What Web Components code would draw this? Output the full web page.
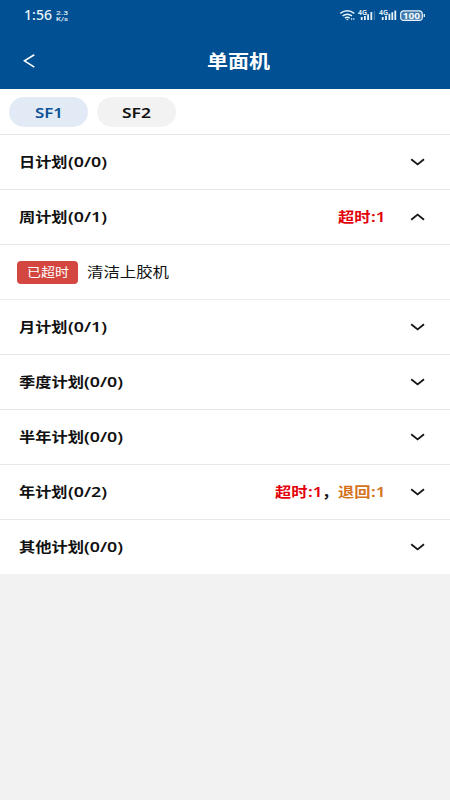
<!DOCTYPE html>
<html lang="zh-CN">
<head>
<meta charset="utf-8">
<title>单面机</title>
<style>
html,body{margin:0;height:100%;background:#f2f2f2;font-family:"Noto Sans","Noto Sans CJK SC",sans-serif;overflow:hidden}
</style>
</head>
<body>
<plan-app></plan-app>
<script>
const define = (name, html, setup) => customElements.define(name, class extends HTMLElement {
  connectedCallback() {
    if (this.shadowRoot) return;
    const t = document.createElement('template');
    t.innerHTML = html;
    this.attachShadow({mode: 'open'}).append(t.content.cloneNode(true));
    if (setup) setup(this, this.shadowRoot);
  }
});

// Text stretched horizontally to the width given by its "w" attribute.
define('fit-text', `<style>
:host{display:block;white-space:nowrap;flex:none}
:host([num]){font-size:14.5px;font-weight:650}
span{display:inline-block;transform-origin:0 50%}
</style><span><slot></slot></span>`, (el, root) => {
  const w = +el.getAttribute('w'), s = root.querySelector('span');
  const natural = s.getBoundingClientRect().width;
  el.style.width = w + 'px';
  s.style.transform = `scaleX(${w / natural})`;
});

define('status-bar', `<style>
:host{display:flex;height:32px;padding:0 25px 0 24px;align-items:center;box-sizing:border-box;color:#e8f4fa}
.time{font-size:13.5px;font-weight:500;line-height:20px;margin-top:-2px}
.rate{display:grid;grid-template-rows:6px 6px;margin:-1px auto 0 4px;font-family:Roboto,sans-serif;font-size:6px;font-weight:500;line-height:6px}
svg{display:block;margin-top:-2px}
</style>
<fit-text class="time" w="28">1:56</fit-text>
<div class="rate"><fit-text w="12">2.3</fit-text><fit-text w="12">K/s</fit-text></div>
<svg width="86" height="14" viewBox="339 8 86 14" fill="none" stroke="#e8f4fa">
<path d="M340.3 13.4q7-5.2 14 0M342.6 15.9q4.7-3.5 9.4 0M344.9 18.1q2.4-1.7 4.8 0" stroke-width="1.5"/>
<path d="M346 19.1h2.6l-1.3 1.3z" fill="#e8f4fa" stroke="none"/>
<path d="M351 19.1h1.2m1 0h1.2" stroke-width="1.5"/>
<path d="M361.7 20v-3M364.9 20v-4M368.1 20v-5.7M371.3 20v-8M382.7 20v-3M386 20v-4.2M389.4 20v-6.3M392.3 20v-7.8M395.3 20v-9.5" stroke-width="1.8"/>
<path d="M374.3 20V11" stroke="#5285b3" stroke-width="1"/>
<rect x="400.7" y="10.8" width="21.6" height="9.6" rx="3.2" fill="#3f79ac" stroke-width="1.2"/>
<path d="M424.3 14v3" stroke-width="1.3"/>
<g fill="#f4fbff" stroke="none" font-family="Noto Sans" font-weight="600">
<text x="358" y="14.8" font-size="6.5" textLength="9" lengthAdjust="spacingAndGlyphs">4G</text>
<text x="379" y="14.8" font-size="6.5" textLength="9" lengthAdjust="spacingAndGlyphs">4G</text>
<text x="402.7" y="19" font-size="9.5" font-weight="700" textLength="17.5" lengthAdjust="spacingAndGlyphs">100</text></g>
</svg>`);

define('nav-bar', `<style>
:host{display:grid;grid-template-columns:1fr auto 1fr;align-items:center;height:57px;padding-left:23px;color:#fff;box-sizing:border-box}
.title{font-size:18px;font-weight:700;line-height:26px;margin-left:4px}
svg{display:block}
</style>
<svg width="13" height="16" viewBox="0 0 13 16" fill="none" stroke="#fff" stroke-width="1.6"><path d="M11.3 1.8L1.5 7.8L11.3 14.2"/></svg>
<fit-text class="title" w="63">单面机</fit-text>`);

define('tab-pill', `<style>
:host{display:flex;justify-content:center;align-items:center;width:79px;height:30px;box-sizing:border-box;padding-bottom:1px;border-radius:15px;background:#f2f2f2;color:#111;font-size:14.5px;font-weight:600}
:host([active]){background:#e2ebf5;color:#0b5197}
</style><slot></slot>`);

define('plan-row', `<style>
:host{display:flex;align-items:center;height:55px;box-sizing:border-box;border-bottom:1px solid #e8e8e8;background:#fff;padding:0 25px 0 19px;font-size:14px;font-weight:700;line-height:20px;color:#111}
:host(:last-of-type){height:54px;border:0}
.head,.tail{display:flex;padding-bottom:1px}
.head{flex:1}
.tail{margin-right:25px}
::slotted([num]){margin-top:-.5px}
svg{display:block}
:host([open]) svg{transform:scaleY(-1)}
</style>
<div class="head"><slot></slot></div><div class="tail"><slot name="tail"></slot></div>
<svg width="15" height="8" viewBox="0 0 15 8" fill="none" stroke="#171717" stroke-width="1.9"><path d="M1.2 1.2L7.6 6.4L14 1.2"/></svg>`);

define('task-item', `<style>
:host{display:flex;align-items:center;height:55px;box-sizing:border-box;border-bottom:1px solid #ececec;background:#fff;padding-left:17px;gap:9px;color:#111;font-size:14px;line-height:20px}
.badge{display:flex;align-items:center;justify-content:center;width:61px;height:23px;box-sizing:border-box;padding-top:1px;border-radius:4px;background:#d34740;color:#fff;font-size:12px}
</style><div class="badge"><slot name="badge"></slot></div><slot></slot>`);

define('plan-app', `<style>
:host{display:block}
header{height:89px;background:#005093}
nav{display:flex;gap:9px;height:46px;box-sizing:border-box;padding:8px 9px 7px;background:#fff;border-bottom:1px solid #e8e8e8}
.late{color:#e3000b}.back{color:#d4731c}
.tail{display:flex}
.tail [num]{margin-top:-.5px}
</style>
<header><status-bar></status-bar><nav-bar></nav-bar></header>
<nav><tab-pill active><fit-text w="28">SF1</fit-text></tab-pill><tab-pill><fit-text w="29">SF2</fit-text></tab-pill></nav>
<main>
<plan-row><fit-text w="48.5">日计划</fit-text><fit-text num w="39">(0/0)</fit-text></plan-row>
<plan-row open><fit-text w="48.5">周计划</fit-text><fit-text num w="39">(0/1)</fit-text><div slot="tail" class="tail late"><fit-text w="32.5">超时</fit-text><fit-text num w="14.5">:1</fit-text></div></plan-row>
<task-item><fit-text slot="badge" w="42">已超时</fit-text><fit-text w="82">清洁上胶机</fit-text></task-item>
<plan-row><fit-text w="48.5">月计划</fit-text><fit-text num w="39">(0/1)</fit-text></plan-row>
<plan-row><fit-text w="65">季度计划</fit-text><fit-text num w="39">(0/0)</fit-text></plan-row>
<plan-row><fit-text w="65">半年计划</fit-text><fit-text num w="39">(0/0)</fit-text></plan-row>
<plan-row><fit-text w="48.5">年计划</fit-text><fit-text num w="39">(0/2)</fit-text><div slot="tail" class="tail"><fit-text class="late" w="32.5">超时</fit-text><fit-text num class="late" w="14.5">:1</fit-text><fit-text w="16">，</fit-text><fit-text class="back" w="32.5">退回</fit-text><fit-text num class="back" w="14.5">:1</fit-text></div></plan-row>
<plan-row><fit-text w="65">其他计划</fit-text><fit-text num w="39">(0/0)</fit-text></plan-row>
</main>`);
</script>
</body>
</html>
